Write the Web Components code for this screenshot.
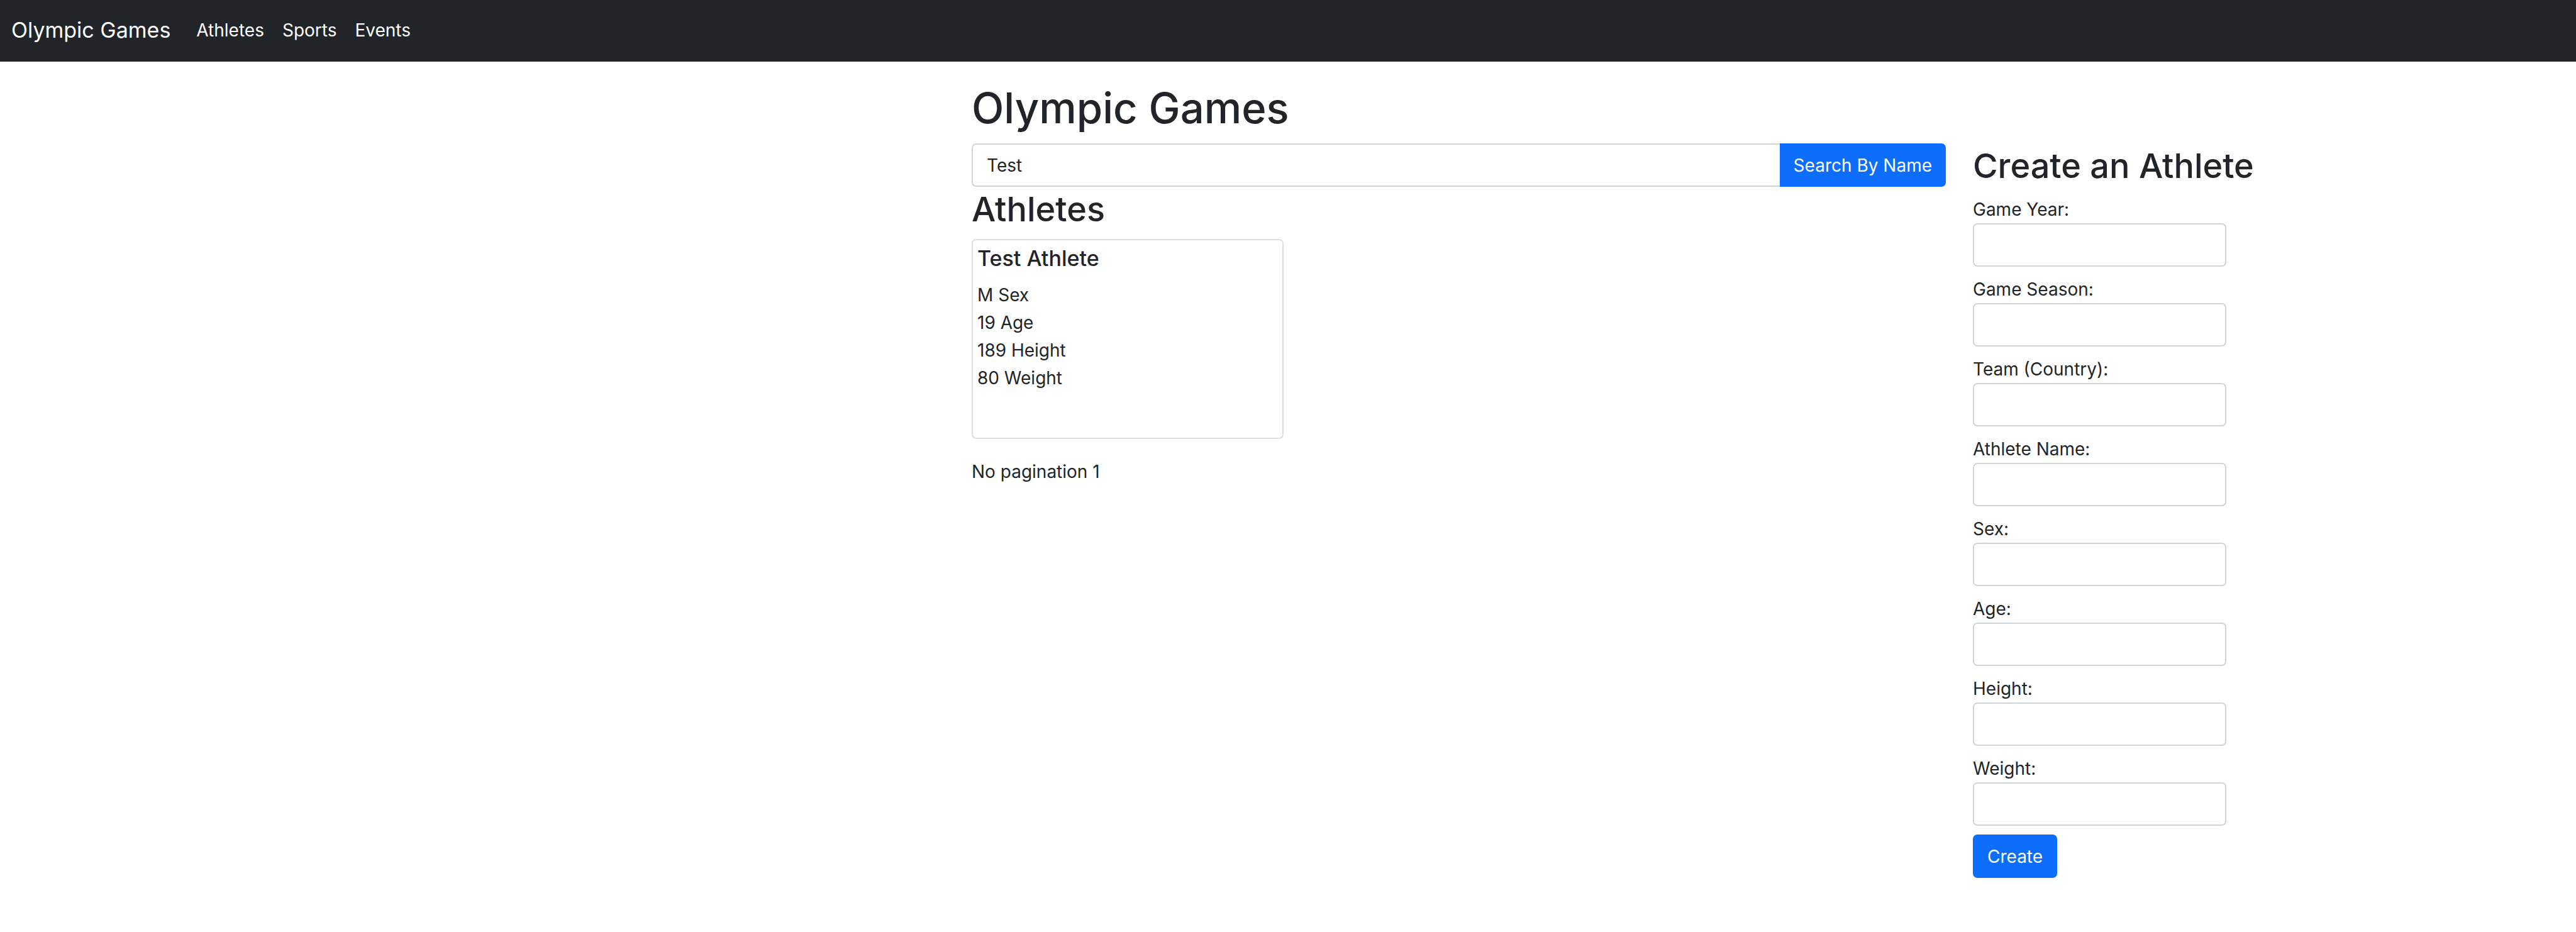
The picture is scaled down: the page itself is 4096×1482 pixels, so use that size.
<!DOCTYPE html>
<html lang="en">
<head>
<meta charset="utf-8">
<title>Olympic Games</title>
<style>
  body {
    --ink: #212529;
    --primary: #0d6efd;
    --line: #ced4da;
    --radius: 7px;
    margin: 0;
    background: #fff;
    color: var(--ink);
    font: 400 28px/44px Inter, "Liberation Sans", sans-serif;
  }
</style>
</head>
<body>
<olympic-app></olympic-app>

<template id="app">
  <style>
    :host { display: block; }
    main { display: grid; grid-template-columns: 1545fr 1549fr 1002fr; align-items: start; }
    .results { grid-column: 2; padding-top: 34px; }
    h1 { margin: 0 0 16px; font-size: 67px; font-weight: 500; line-height: 80px; }
    .cards { display: grid; grid-template-columns: repeat(3, 1fr); gap: 30px; margin-bottom: 30px; }
    p { margin: 0; }
    .create { padding: 130px 0 0 43px; }
  </style>
  <site-navbar brand="Olympic Games">
    <nav-item href="#athletes">Athletes</nav-item>
    <nav-item href="#sports">Sports</nav-item>
    <nav-item href="#events">Events</nav-item>
  </site-navbar>
  <main>
    <section class="results">
      <h1>Olympic Games</h1>
      <search-bar value="Test">Search By Name</search-bar>
      <section-title>Athletes</section-title>
      <div class="cards">
        <athlete-card name="Test Athlete" sex="M" age="19" height="189" weight="80"></athlete-card>
      </div>
      <p>No pagination 1</p>
    </section>
    <section class="create">
      <section-title>Create an Athlete</section-title>
      <athlete-form></athlete-form>
    </section>
  </main>
</template>

<template id="navbar">
  <style>
    :host { display: block; background: var(--ink); color: #fff; }
    nav { display: flex; align-items: center; gap: 41px; padding: 14px 18px 16px; line-height: 68px; }
    .brand { color: inherit; font-size: 34px; text-decoration: none; }
    .links { display: flex; align-items: center; gap: 29px; }
  </style>
  <nav>
    <a class="brand" href="#"></a>
    <div class="links"><slot></slot></div>
  </nav>
</template>

<template id="nav-item">
  <style>
    :host { display: block; }
    a { display: block; color: inherit; text-decoration: none; }
  </style>
  <a><slot></slot></a>
</template>

<template id="title">
  <style>
    :host { display: block; margin-bottom: 11px; }
    h2 { margin: 0; font-size: 54px; font-weight: 500; line-height: 72px; }
  </style>
  <h2><slot></slot></h2>
</template>

<template id="search">
  <style>
    :host { display: block; }
    form { display: flex; height: 69px; }
    input {
      flex: 1; min-width: 0; box-sizing: border-box; margin: 0; padding: 0 22px;
      border: 2px solid var(--line); border-right: 0; border-radius: var(--radius) 0 0 var(--radius);
      background: #fff; color: inherit; font: inherit; outline: 0;
    }
    button {
      margin: 0; padding: 0 22px; border: 0; border-radius: 0 var(--radius) var(--radius) 0;
      background: var(--primary); color: #fff; font: inherit;
    }
  </style>
  <form>
    <input type="text" aria-label="Search By Name">
    <button type="button"><slot></slot></button>
  </form>
</template>

<template id="card">
  <style>
    :host {
      display: block; box-sizing: border-box; min-height: 318px; padding: 7px;
      border: 2px solid #dfdfdf; border-radius: var(--radius);
    }
    h5 { margin: 0 0 15px; font-size: 34px; font-weight: 500; line-height: 43px; }
  </style>
  <h5></h5>
  <div data-key="sex" data-label="Sex"></div>
  <div data-key="age" data-label="Age"></div>
  <div data-key="height" data-label="Height"></div>
  <div data-key="weight" data-label="Weight"></div>
</template>

<template id="field">
  <style>
    :host { display: block; }
    label { display: block; }
    input {
      display: block; box-sizing: border-box; width: 403px; height: 69px; margin: 0; padding: 0 22px;
      border: 2px solid var(--line); border-radius: var(--radius);
      background: #fff; color: inherit; font: inherit;
    }
  </style>
  <label for="control"><slot></slot></label>
  <input id="control" type="text">
</template>

<template id="athlete-form">
  <style>
    :host { display: block; }
    form { display: flex; flex-direction: column; align-items: flex-start; gap: 14px; }
    button {
      height: 69px; margin: 0; padding: 0 23px; border: 0; border-radius: var(--radius);
      background: var(--primary); color: #fff; font: inherit;
    }
  </style>
  <form>
    <form-field>Game Year:</form-field>
    <form-field>Game Season:</form-field>
    <form-field>Team (Country):</form-field>
    <form-field>Athlete Name:</form-field>
    <form-field>Sex:</form-field>
    <form-field>Age:</form-field>
    <form-field>Height:</form-field>
    <form-field>Weight:</form-field>
    <button type="button">Create</button>
  </form>
</template>

<script>
  const define = (tag, templateId, setup = () => {}) =>
    customElements.define(tag, class extends HTMLElement {
      connectedCallback() {
        if (this.shadowRoot) return;
        const root = this.attachShadow({ mode: 'open' });
        root.append(document.getElementById(templateId).content.cloneNode(true));
        setup(root, this);
      }
    });

  define('nav-item', 'nav-item', (root, el) => {
    root.querySelector('a').href = el.getAttribute('href');
  });
  define('site-navbar', 'navbar', (root, el) => {
    root.querySelector('.brand').textContent = el.getAttribute('brand');
  });
  define('section-title', 'title');
  define('search-bar', 'search', (root, el) => {
    root.querySelector('input').value = el.getAttribute('value');
  });
  define('athlete-card', 'card', (root, el) => {
    root.querySelector('h5').textContent = el.getAttribute('name');
    for (const row of root.querySelectorAll('[data-key]')) {
      row.textContent = `${el.getAttribute(row.dataset.key)} ${row.dataset.label}`;
    }
  });
  define('form-field', 'field');
  define('athlete-form', 'athlete-form');
  define('olympic-app', 'app');
</script>
</body>
</html>
